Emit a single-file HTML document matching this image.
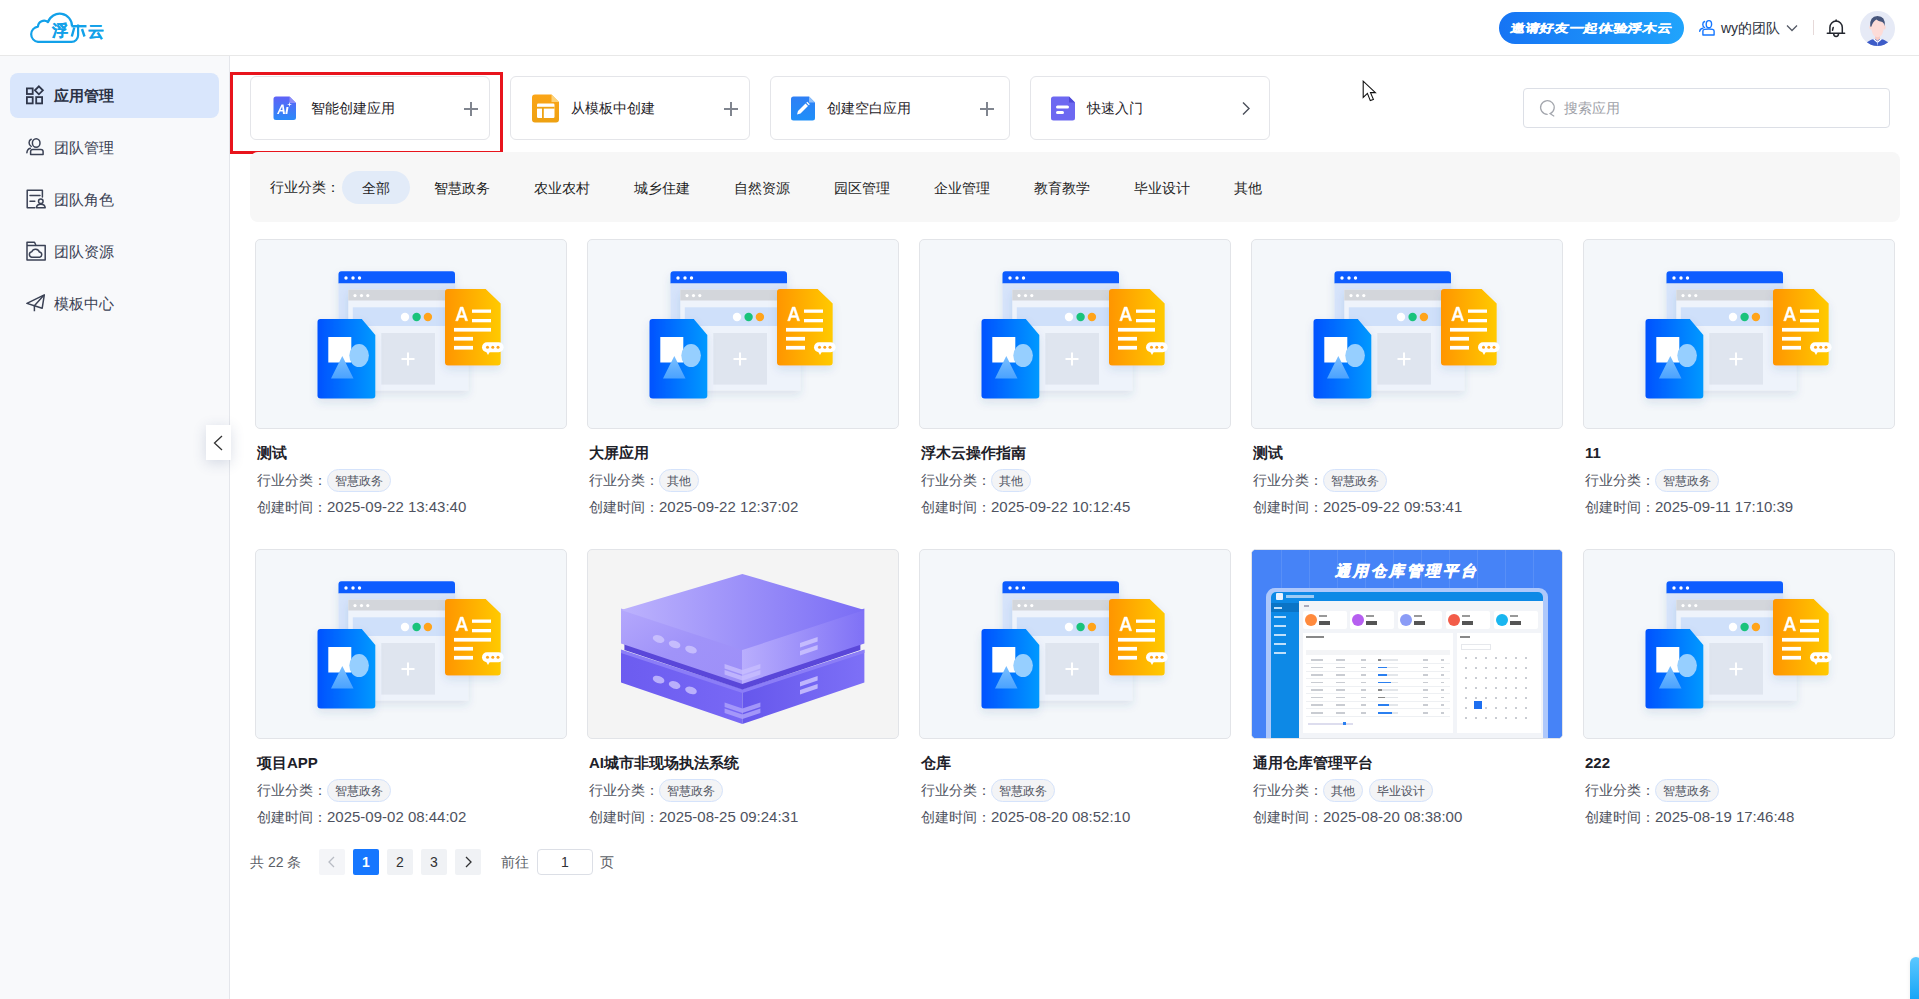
<!DOCTYPE html>
<html><head><meta charset="utf-8">
<style>
*{box-sizing:border-box;margin:0;padding:0}
html,body{width:1919px;height:999px;overflow:hidden;background:#fff;font-family:"Liberation Sans",sans-serif;color:#303133}
.abs{position:absolute}
#header{position:absolute;left:0;top:0;width:1919px;height:56px;border-bottom:1px solid #e8e8e8;background:#fff}
#sidebar{position:absolute;left:0;top:56px;width:230px;height:943px;background:#f8f9fb;border-right:1px solid #e4e6eb}
.menu{position:absolute;left:10px;width:209px;height:45px;border-radius:8px;font-size:15px;color:#3b4255;line-height:45px}
.menu.active{background:#d9e6fc;font-weight:bold;color:#2b3245}
.menu svg{position:absolute;left:16px;top:12px}
.menu span{position:absolute;left:44px;top:0}
.act{position:absolute;top:76px;width:240px;height:64px;border:1px solid #e4e5e9;border-radius:6px;background:#fff}
.act .t{position:absolute;top:0;line-height:62px;font-size:14px;color:#1f2329}
.act .plus{position:absolute;left:213px;top:25px;width:14px;height:14px}
.act .plus:before{content:"";position:absolute;left:6px;top:0;width:2px;height:14px;background:#80858f}
.act .plus:after{content:"";position:absolute;left:0;top:6px;width:14px;height:2px;background:#80858f}
#filter{position:absolute;left:250px;top:152px;width:1650px;height:70px;background:#f7f7f7;border-radius:8px}
#filter .lbl{position:absolute;left:20px;top:0;line-height:71px;font-size:14px;color:#1f1f1f}
#filter .it{position:absolute;top:19px;height:33px;line-height:34px;font-size:14px;color:#1f1f1f}
#filter .pill{background:#e2ebf8;border-radius:17px;width:68px;text-align:center}
.card{position:absolute;width:313px;height:280px}
.card .img{position:absolute;left:0;top:0;width:312px;height:190px;border:1px solid #e2e4e8;border-radius:5px;background:#f4f7fa;overflow:hidden}
.card .ti{position:absolute;left:2px;top:204px;font-size:15px;font-weight:bold;color:#1d2129;line-height:20px}
.card .r1{position:absolute;left:2px;top:230px;font-size:14px;color:#4e5260;line-height:22px}
.card .r2{position:absolute;left:2px;top:257px;font-size:14px;color:#4e5260;line-height:22px}
.tag+.tag{margin-left:6px}
.tag{display:inline-block;height:23px;line-height:22px;padding:0 7px;border:1px solid #d5e3fb;background:#f3f4f6;border-radius:12px;font-size:12px;color:#4e5260;vertical-align:top;margin-left:0}
.pg{position:absolute;top:849px;width:26px;height:26px;border-radius:2px;background:#f0f2f5;font-size:14px;color:#303133;text-align:center;line-height:26px}
</style></head><body>

<div id="header">
  <svg class="abs" style="left:25px;top:8px" width="85" height="40" viewBox="0 0 85 40">
    <g fill="none" stroke="#12a1e9" stroke-width="2.2" stroke-linecap="butt" stroke-linejoin="round">
      <path d="M47,18.2 A12.3,12.3 0 0 0 23,14.2 A6,6 0 0 0 13,18.6 A7.7,7.7 0 0 0 13,33.9 L46.5,33.9 A6.6,6.6 0 0 0 53.1,27.3 L53.1,16.4"/>
      <path d="M46.5,18.2 L61.5,18.2" stroke-width="2.4"/>
      <path d="M49.3,19.5 L46.8,28.5 M57,21 L59.5,28.5" stroke-width="2.4"/>
    </g>
    <text x="27" y="28" font-size="15.5" font-weight="bold" fill="#12a1e9" stroke="#12a1e9" stroke-width="0.2">浮</text>
    <text x="63" y="28.5" font-size="15.5" font-weight="bold" fill="#12a1e9" stroke="#12a1e9" stroke-width="0.2">云</text>
  </svg>
  <div class="abs" style="left:1499px;top:12px;width:185px;height:32px;border-radius:16px;background:linear-gradient(90deg,#1674f4,#20a4fc)"><div class="abs" style="left:0;top:0;width:185px;height:32px;color:#fff;font-size:14.2px;font-weight:bold;line-height:32px;text-align:center;-webkit-text-stroke:0.35px #fff;letter-spacing:0.7px;transform:scaleY(0.8) skewX(-9deg)">邀请好友一起体验浮木云</div></div>
  <svg class="abs" style="left:1698px;top:19px" width="18" height="18" viewBox="0 0 18 18"><g fill="none" stroke="#1677ff" stroke-width="1.4" stroke-linecap="round" stroke-linejoin="round"><ellipse cx="10.9" cy="5.2" rx="2.7" ry="3.6"/><path d="M6.6,2.5 A2.6,3.2 0 0 0 6.6,8.6"/><path d="M4.9,16 V12.1 Q4.9,10.7 6.6,10.4 Q10.6,9.6 14.6,10.4 Q16.1,10.8 16.1,12.1 V16 Z"/><path d="M1.7,12.3 Q1.9,9.6 5,9.2"/></g></svg>
  <div class="abs" style="left:1721px;top:17px;font-size:14px;line-height:22px;color:#2a2f3a">wy的团队</div>
  <svg class="abs" style="left:1786px;top:24px" width="12" height="8" viewBox="0 0 12 8"><path d="M1,1.5 L6,6.5 L11,1.5" fill="none" stroke="#555a66" stroke-width="1.3"/></svg>
  <div class="abs" style="left:1813px;top:20px;width:1px;height:15px;background:#e6d9d9"></div>
  <svg class="abs" style="left:1826px;top:18px" width="20" height="20" viewBox="0 0 20 20"><g fill="none" stroke="#23262e" stroke-width="1.5" stroke-linecap="round"><path d="M3.9,15.3 V9.5 A6.2,6.4 0 0 1 16.3,9.5 V15.3"/><path d="M1.3,15.3 H18.6"/><path d="M7.7,15.8 a2.4,2.7 0 0 0 4.8,0"/><path d="M7.2,9.5 L6.5,12.3"/><path d="M10.1,2 V3"/></g></svg>
  <svg class="abs" style="left:1860px;top:11px" width="35" height="35" viewBox="0 0 35 35">
    <defs><clipPath id="avc"><circle cx="17.5" cy="17.5" r="17.5"/></clipPath></defs>
    <circle cx="17.5" cy="17.5" r="17.5" fill="#e6eaf6"/>
    <g clip-path="url(#avc)">
      <path d="M6.5,31.5 Q11,28 16,27.6 L19,27.6 Q24,28 28.5,31.5 Q23,36 17.5,35.8 Q12,36 6.5,31.5 Z" fill="#3d5cc8"/>
      <path d="M15,22 h5 v5.5 l-2.5,2.5 l-2.5,-2.5z" fill="#f8cbc4"/>
      <path d="M14.3,27.4 L17.5,30.5 L20.7,27.4 L21.8,28.5 L17.5,32 L13.2,28.5z" fill="#fff"/>
      <path d="M16.9,30.5 L17.5,35.5 L18.1,30.5z" fill="#c5d3ff"/>
      <ellipse cx="10.6" cy="16.3" rx="1.3" ry="2.2" fill="#fbd8d3"/>
      <ellipse cx="24.4" cy="16.3" rx="1.3" ry="2.2" fill="#fbd8d3"/>
      <path d="M10.9,11 Q10.7,21 14,24.8 Q17.5,27.6 21,24.8 Q24.3,21 24.1,11 Q17.5,6 10.9,11 Z" fill="#fddcd8"/>
      <path d="M10.2,15.5 Q9.4,5 17.5,5 Q25.6,5 24.8,15.2 Q24,11.5 21.5,10.8 Q18.5,10.3 16.3,8.6 Q13,10.5 11.3,15.8 Z" fill="#46557b"/>
    </g>
  </svg>
</div>

<div id="sidebar">
  <div class="menu active" style="top:17px">
    <svg width="20" height="20" viewBox="0 0 20 20"><g fill="none" stroke="#2f364a" stroke-width="1.8"><rect x="0.9" y="3.4" width="5.8" height="5.6"/><rect x="0.9" y="12.1" width="5.8" height="6.3"/><rect x="10.2" y="12.1" width="5.9" height="6.3"/><path d="M12.9,1.3 L16.9,5.3 L12.9,9.3 L8.9,5.3 Z"/></g></svg>
    <span>应用管理</span></div>
  <div class="menu" style="top:69px">
    <svg width="20" height="20" viewBox="0 0 20 20"><g fill="none" stroke="#3b4255" stroke-width="1.5" stroke-linecap="round" stroke-linejoin="round"><ellipse cx="10.2" cy="6" rx="3.8" ry="4.3"/><path d="M5.2,2.3 A3.3,3.8 0 0 0 5.2,9.4"/><path d="M4.6,17.6 V14.6 Q4.6,12.6 6.8,12.5 H14.8 Q17.1,12.6 17.1,14.6 V17.6 Z"/><path d="M0.9,15.8 Q1.2,11.9 4.4,11.3"/></g></svg>
    <span>团队管理</span></div>
  <div class="menu" style="top:121px">
    <svg width="20" height="20" viewBox="0 0 20 20"><g fill="none" stroke="#3b4255" stroke-width="1.5" stroke-linejoin="round" stroke-linecap="round"><path d="M8.8,18.8 H1.2 V1.2 H16.4 V8"/><path d="M4,6.4 H14 M4,12.3 H8.8"/><circle cx="14.8" cy="12.2" r="2.3"/><path d="M10.4,18.8 Q10.6,15.2 14.8,15.2 Q19,15.2 19.2,18.8 Z"/></g></svg>
    <span>团队角色</span></div>
  <div class="menu" style="top:173px">
    <svg width="20" height="20" viewBox="0 0 20 20"><g fill="none" stroke="#3b4255" stroke-width="1.5" stroke-linejoin="round"><path d="M1,18.9 V1.3 H8.5 L10,4.5 H19.2 V18.9 Z"/><path d="M1,4.5 H10"/><path d="M5.6,16.2 a2.8,2.8 0 0 1 0.2,-5.5 a4,3.8 0 0 1 7.6,0.4 a2.6,2.6 0 0 1 0.4,5.1 Z"/></g></svg>
    <span>团队资源</span></div>
  <div class="menu" style="top:225px">
    <svg style="top:13px" width="19" height="20" viewBox="0 0 19 20"><g fill="none" stroke="#3b4255" stroke-width="1.5" stroke-linejoin="round"><path d="M0.9,9.4 L18.3,0.9 L16.2,14.2 L8.4,11.7 Z"/><path d="M17.6,1.6 L8.4,11.7 V17.2"/></g></svg>
    <span>模板中心</span></div>
</div>

<!-- collapse -->
<div class="abs" style="left:206px;top:425px;width:25px;height:35px;background:#fff;box-shadow:0 3px 14px rgba(50,70,120,0.18)">
  <svg class="abs" style="left:7px;top:10px" width="10" height="16" viewBox="0 0 10 16"><path d="M9,1 L1.5,8 L9,15" fill="none" stroke="#333" stroke-width="1.3"/></svg>
</div>


<div class="abs" style="left:230px;top:72px;width:273px;height:82px;border:3px solid #e8141c"></div>
<div class="act" style="left:250px">
  <svg class="abs" style="left:22px;top:19px" width="24" height="25" viewBox="0 0 24 25">
    <defs><linearGradient id="gai" x1="0" y1="0" x2="0" y2="1"><stop offset="0" stop-color="#5f62f7"/><stop offset="1" stop-color="#2a8af8"/></linearGradient></defs>
    <path d="M3,0.5 H16.5 L23,7 V21.5 a2.5,2.5 0 0 1 -2.5,2.5 H3 a2.5,2.5 0 0 1 -2.5,-2.5 V3 a2.5,2.5 0 0 1 2.5,-2.5z" fill="url(#gai)"/>
    <path d="M16.5,0.5 V7 H23z" fill="#8f8ff8"/>
    <path d="M4,18 L8.5,8.5 H10.5 L12,18 H10 L9.7,15.5 H6.8 L5.8,18z M7.5,14 H9.5 L9.2,10.5z" fill="#fff"/>
    <path d="M13.5,11 H15.5 L14.3,18 H12.3z" fill="#fff"/>
    <path d="M16.5,6 L17,8 L19,8.5 L17,9 L16.5,11 L16,9 L14,8.5 L16,8z" fill="#fff"/>
  </svg>
  <div class="t" style="left:60px">智能创建应用</div>
  <div class="plus"></div>
</div>
<div class="act" style="left:510px">
  <svg class="abs" style="left:21px;top:17px" width="28" height="29" viewBox="0 0 28 29">
    <defs><linearGradient id="gtp" x1="0" y1="0" x2="0" y2="1"><stop offset="0" stop-color="#fba517"/><stop offset="1" stop-color="#eea112"/></linearGradient></defs>
    <path d="M3,0.5 H19.5 L27,8 V25.5 a3,3 0 0 1 -3,3 H3 a3,3 0 0 1 -3,-3 V3.5 a3,3 0 0 1 3,-3z" fill="url(#gtp)"/>
    <path d="M19.5,0.5 V8 H27z" fill="#fcd27a"/>
    <rect x="5" y="9.5" width="17.5" height="14.5" rx="1.2" fill="#fff"/>
    <rect x="5" y="12.8" width="17.5" height="1.8" fill="#eea314"/>
    <rect x="10" y="13" width="1.8" height="11" fill="#eea314"/>
  </svg>
  <div class="t" style="left:60px">从模板中创建</div>
  <div class="plus"></div>
</div>
<div class="act" style="left:770px">
  <svg class="abs" style="left:20px;top:19px" width="25" height="25" viewBox="0 0 25 25">
    <defs><linearGradient id="gbl" x1="0" y1="0" x2="0" y2="1"><stop offset="0" stop-color="#2f7ff5"/><stop offset="1" stop-color="#1e8ff9"/></linearGradient></defs>
    <path d="M2.5,0.5 H18 L24,6.5 V22 a2.5,2.5 0 0 1 -2.5,2.5 H2.5 a2.5,2.5 0 0 1 -2.5,-2.5 V3 a2.5,2.5 0 0 1 2.5,-2.5z" fill="url(#gbl)"/>
    <path d="M18,0.5 V6.5 H24z" fill="#8fc0fb"/>
    <path d="M6,18.5 L7,15 L14.5,7.5 L17,10 L9.5,17.5z" fill="#fff"/>
    <path d="M15.3,6.7 L16.3,5.7 L18.8,8.2 L17.8,9.2z" fill="#fff"/>
  </svg>
  <div class="t" style="left:56px">创建空白应用</div>
  <div class="plus" style="left:209px"></div>
</div>
<div class="act" style="left:1030px">
  <svg class="abs" style="left:20px;top:19px" width="25" height="25" viewBox="0 0 25 25">
    <path d="M2.5,0.5 H18 L24,6.5 V22 a2.5,2.5 0 0 1 -2.5,2.5 H2.5 a2.5,2.5 0 0 1 -2.5,-2.5 V3 a2.5,2.5 0 0 1 2.5,-2.5z" fill="#6d68f1"/>
    <path d="M18,0.5 V6.5 H24z" fill="#4f49d6"/>
    <rect x="5" y="9.5" width="13" height="3" rx="1.5" fill="#fff"/>
    <rect x="5" y="15" width="8" height="3" rx="1.5" fill="#fff"/>
  </svg>
  <div class="t" style="left:56px">快速入门</div>
  <svg class="abs" style="left:210px;top:24px" width="10" height="15" viewBox="0 0 10 15"><path d="M2,1.5 L8,7.5 L2,13.5" fill="none" stroke="#4a4f5a" stroke-width="1.4"/></svg>
</div>
<!-- search -->
<div class="abs" style="left:1523px;top:88px;width:367px;height:40px;border:1px solid #dcdfe6;border-radius:4px;background:#fff">
  <svg class="abs" style="left:13px;top:8px" width="22" height="22" viewBox="0 0 22 22"><g fill="none" stroke="#a3a6ad" stroke-width="1.3" stroke-linecap="round"><path d="M10.2,17.3 A6.8,6.8 0 1 1 13.2,16.7 L16.8,19"/></g></svg>
  <div class="abs" style="left:40px;top:9px;font-size:14px;line-height:20px;color:#9ea1a8">搜索应用</div>
</div>
<div id="filter"><div class="lbl">行业分类：</div><div class="it pill" style="left:92px">全部</div><div class="it" style="left:184px">智慧政务</div><div class="it" style="left:284px">农业农村</div><div class="it" style="left:384px">城乡住建</div><div class="it" style="left:484px">自然资源</div><div class="it" style="left:584px">园区管理</div><div class="it" style="left:684px">企业管理</div><div class="it" style="left:784px">教育教学</div><div class="it" style="left:884px">毕业设计</div><div class="it" style="left:984px">其他</div></div>
<svg width="0" height="0" style="position:absolute">
 <defs>
  <linearGradient id="gbd" x1="0" y1="0" x2="1" y2="0"><stop offset="0" stop-color="#0052ff"/><stop offset="1" stop-color="#0099ff"/></linearGradient>
  <linearGradient id="god" x1="0" y1="0" x2="1" y2="0"><stop offset="0" stop-color="#ff9500"/><stop offset="1" stop-color="#ffca00"/></linearGradient>
  <linearGradient id="gtri" x1="0" y1="0" x2="0" y2="1"><stop offset="0" stop-color="#7cc0ff"/><stop offset="1" stop-color="#4aa2ff"/></linearGradient>
  <filter id="shd" x="-30%" y="-30%" width="160%" height="160%"><feDropShadow dx="0" dy="4" stdDeviation="4" flood-color="#3a5a90" flood-opacity="0.13"/></filter>
  <symbol id="ill" viewBox="0 0 312 190">
   <g filter="url(#shd)">
    <path d="M86.5,32.3 H197 a3,3 0 0 1 3,3 V44.5 H83.5 V35.3 a3,3 0 0 1 3,-3z" fill="#0a5cff"/>
    <rect x="83.5" y="44.5" width="116.5" height="60" fill="#d6e4fb"/>
   </g>
   <circle cx="91" cy="39" r="1.7" fill="#fff"/><circle cx="98" cy="39" r="1.7" fill="#fff"/><circle cx="104.5" cy="39" r="1.7" fill="#fff"/>
   <g filter="url(#shd)">
    <rect x="93.3" y="50.6" width="120" height="101" fill="#eef3fb"/>
   </g>
   <rect x="93.3" y="50.6" width="120" height="10.9" fill="#d3d6db"/>
   <circle cx="100" cy="56.6" r="1.6" fill="#fff"/><circle cx="106.5" cy="56.6" r="1.6" fill="#fff"/><circle cx="112.8" cy="56.6" r="1.6" fill="#fff"/>
   <rect x="97.8" y="68.3" width="115" height="18.7" fill="#cfe0fa"/>
   <circle cx="150" cy="78" r="4.2" fill="#fff"/><circle cx="161.6" cy="78" r="4.2" fill="#19c37b"/><circle cx="172.9" cy="78" r="4.2" fill="#ffa41b"/>
   <rect x="126.3" y="94" width="53.7" height="51.6" fill="#dfe5ef"/>
   <path d="M153,113.5 V126.5 M146.5,120 H159.5" stroke="#fff" stroke-width="2"/>
   <g filter="url(#shd)">
    <path d="M65.5,80 H106.8 L120.3,96 V156.4 a3,3 0 0 1 -3,3 H65.5 a3,3 0 0 1 -3,-3 V83 a3,3 0 0 1 3,-3z" fill="url(#gbd)"/>
   </g>
   <rect x="73.3" y="98" width="23" height="25.5" fill="#fff"/>
   <ellipse cx="104.1" cy="116.6" rx="9.8" ry="11.5" fill="#96cfff"/>
   <path d="M87.3,117 L98.5,139.6 H76z" fill="url(#gtri)"/>
   <g filter="url(#shd)">
    <path d="M193,50 H230.7 L245.7,64.5 V123.5 a3,3 0 0 1 -3,3 H193 a3,3 0 0 1 -3,-3 V53 a3,3 0 0 1 3,-3z" fill="url(#god)"/>
   </g>
   <path d="M200.6,81.8 L205.3,68 H208 L212.7,81.8 H210.4 L209.3,78.5 H204 L202.9,81.8z M204.6,76.6 H208.7 L206.65,70.5z" fill="#fff" stroke="#fff" stroke-width="0.5"/>
   <g fill="#fff"><rect x="217" y="70.5" width="19" height="3.3"/><rect x="217" y="80" width="19" height="3.3"/><rect x="199" y="88.9" width="37" height="3.7"/><rect x="199" y="97.9" width="19" height="3.7"/><rect x="199" y="106.9" width="19" height="3.7"/></g>
   <rect x="227" y="103.3" width="21.7" height="10" rx="5" fill="#fff"/>
   <path d="M231,112.5 L233,116 L235,112.5z" fill="#fff"/>
   <g fill="#ffa41b"><circle cx="232.5" cy="108.3" r="1.5"/><circle cx="237.8" cy="108.3" r="1.5"/><circle cx="243" cy="108.3" r="1.5"/></g>
  </symbol>
 </defs>
</svg>
<div class="card" style="left:255px;top:239px"><div class="img" style=""><svg width="312" height="190" style="position:absolute;left:-1px;top:-1px"><use href="#ill"/></svg></div><div class="ti">测试</div><div class="r1">行业分类：<span class="tag">智慧政务</span></div><div class="r2">创建时间：<span style="font-size:15px">2025-09-22 13:43:40</span></div></div><div class="card" style="left:587px;top:239px"><div class="img" style=""><svg width="312" height="190" style="position:absolute;left:-1px;top:-1px"><use href="#ill"/></svg></div><div class="ti">大屏应用</div><div class="r1">行业分类：<span class="tag">其他</span></div><div class="r2">创建时间：<span style="font-size:15px">2025-09-22 12:37:02</span></div></div><div class="card" style="left:919px;top:239px"><div class="img" style=""><svg width="312" height="190" style="position:absolute;left:-1px;top:-1px"><use href="#ill"/></svg></div><div class="ti">浮木云操作指南</div><div class="r1">行业分类：<span class="tag">其他</span></div><div class="r2">创建时间：<span style="font-size:15px">2025-09-22 10:12:45</span></div></div><div class="card" style="left:1251px;top:239px"><div class="img" style=""><svg width="312" height="190" style="position:absolute;left:-1px;top:-1px"><use href="#ill"/></svg></div><div class="ti">测试</div><div class="r1">行业分类：<span class="tag">智慧政务</span></div><div class="r2">创建时间：<span style="font-size:15px">2025-09-22 09:53:41</span></div></div><div class="card" style="left:1583px;top:239px"><div class="img" style=""><svg width="312" height="190" style="position:absolute;left:-1px;top:-1px"><use href="#ill"/></svg></div><div class="ti">11</div><div class="r1">行业分类：<span class="tag">智慧政务</span></div><div class="r2">创建时间：<span style="font-size:15px">2025-09-11 17:10:39</span></div></div><div class="card" style="left:255px;top:549px"><div class="img" style=""><svg width="312" height="190" style="position:absolute;left:-1px;top:-1px"><use href="#ill"/></svg></div><div class="ti">项目APP</div><div class="r1">行业分类：<span class="tag">智慧政务</span></div><div class="r2">创建时间：<span style="font-size:15px">2025-09-02 08:44:02</span></div></div><div class="card" style="left:587px;top:549px"><div class="img" style="background:#f4f4f4"><svg width="312" height="190" viewBox="0 0 312 190" style="position:absolute;left:-1px;top:-1px">
 <defs>
  <linearGradient id="sv_top" x1="0" y1="0" x2="1" y2="0"><stop offset="0" stop-color="#bdb3fd"/><stop offset="1" stop-color="#7a6df5"/></linearGradient>
  <linearGradient id="sv_ul" x1="0" y1="0" x2="1" y2="1"><stop offset="0" stop-color="#b4a8fc"/><stop offset="0.5" stop-color="#a093f9"/><stop offset="1" stop-color="#9d8ff8"/></linearGradient>
  <linearGradient id="sv_ur" x1="0" y1="0" x2="1" y2="0"><stop offset="0" stop-color="#b9aefd"/><stop offset="1" stop-color="#7f71f6"/></linearGradient>
  <linearGradient id="sv_ll" x1="0" y1="0" x2="1" y2="0"><stop offset="0" stop-color="#6c5cf0"/><stop offset="1" stop-color="#7868f5"/></linearGradient>
  <linearGradient id="sv_lr" x1="0" y1="0" x2="1" y2="0"><stop offset="0" stop-color="#6657ec"/><stop offset="1" stop-color="#7d70f7"/></linearGradient>
 </defs>
 <!-- lower box -->
 <path d="M34,101 L155.4,142 L155.4,175 L34,133.4z" fill="url(#sv_ll)"/>
 <path d="M155.4,142 L277.4,101 L277.4,133.4 L155.4,175z" fill="url(#sv_lr)"/>
 
 <!-- dark gap -->
 <path d="M34,100.5 L155.4,140 L277.4,100.5 V104 L155.4,144 L34,104z" fill="#8b7df7"/><path d="M37.4,93 L155.4,133 L273.4,93 V101 L155.4,140.5 L37.4,101z" fill="#5a47d9"/>
 <!-- upper box -->
 <path d="M34,59.5 L155.4,99.5 L155.4,135 L34,94.4z" fill="url(#sv_ul)"/>
 <path d="M155,99.5 L277.4,59.5 L277.4,94.4 L155,135z" fill="url(#sv_ur)"/>
 <path d="M34,61 L155.4,25 L277.4,61 L155.4,101z" fill="url(#sv_top)"/>
 <!-- ovals upper -->
 <g fill="#d2caff" opacity="0.75">
  <ellipse cx="71.6" cy="90" rx="6" ry="3.6" transform="rotate(18 71.6 90)"/>
  <ellipse cx="87.6" cy="95.4" rx="6" ry="3.6" transform="rotate(18 87.6 95.4)"/>
  <ellipse cx="104" cy="100.6" rx="6" ry="3.6" transform="rotate(18 104 100.6)"/>
  <ellipse cx="71.6" cy="130.6" rx="6" ry="3.6" transform="rotate(18 71.6 130.6)"/>
  <ellipse cx="87.6" cy="136" rx="6" ry="3.6" transform="rotate(18 87.6 136)"/>
  <ellipse cx="104" cy="141.4" rx="6" ry="3.6" transform="rotate(18 104 141.4)"/>
 </g>
 <!-- stripes right faces -->
 <g fill="#cdc4ff" opacity="0.85">
  <path d="M213,94 L230.6,88 V92.5 L213,98.5z"/>
  <path d="M213,102 L230.6,96 V100.5 L213,106.5z"/>
  <path d="M213,133 L230.6,127 V131.5 L213,137.5z"/>
  <path d="M213,141 L230.6,135 V139.5 L213,145.5z"/>
 </g>
 <!-- V stripes -->
 <g fill="#c8beff" opacity="0.8">
  <path d="M137.6,115 L155.4,121 L173.4,115 V119.5 L155.4,125.5 L137.6,119.5z"/>
  <path d="M137.6,121 L155.4,127 L173.4,121 V125.5 L155.4,131.5 L137.6,125.5z"/>
 </g>
 <g fill="#a99dfb" opacity="0.9">
  <path d="M137.6,153.5 L155.4,159.5 L173.4,153.5 V158 L155.4,164 L137.6,158z"/>
  <path d="M137.6,159.5 L155.4,165.5 L173.4,159.5 V164 L155.4,170 L137.6,164z"/>
 </g>
</svg>
</div><div class="ti">AI城市非现场执法系统</div><div class="r1">行业分类：<span class="tag">智慧政务</span></div><div class="r2">创建时间：<span style="font-size:15px">2025-08-25 09:24:31</span></div></div><div class="card" style="left:919px;top:549px"><div class="img" style=""><svg width="312" height="190" style="position:absolute;left:-1px;top:-1px"><use href="#ill"/></svg></div><div class="ti">仓库</div><div class="r1">行业分类：<span class="tag">智慧政务</span></div><div class="r2">创建时间：<span style="font-size:15px">2025-08-20 08:52:10</span></div></div><div class="card" style="left:1251px;top:549px"><div class="img" style="background:#4784f8"><div style="position:absolute;left:-1px;top:-1px;width:312px;height:190px;overflow:hidden;border-radius:5px;background:#4683f7"><div style="position:absolute;left:30px;top:0;width:1px;height:40px;background:rgba(255,255,255,0.10)"></div><div style="position:absolute;left:58px;top:0;width:1px;height:40px;background:rgba(255,255,255,0.10)"></div><div style="position:absolute;left:86px;top:0;width:1px;height:40px;background:rgba(255,255,255,0.10)"></div><div style="position:absolute;left:114px;top:0;width:1px;height:40px;background:rgba(255,255,255,0.10)"></div><div style="position:absolute;left:142px;top:0;width:1px;height:40px;background:rgba(255,255,255,0.10)"></div><div style="position:absolute;left:170px;top:0;width:1px;height:40px;background:rgba(255,255,255,0.10)"></div><div style="position:absolute;left:198px;top:0;width:1px;height:40px;background:rgba(255,255,255,0.10)"></div><div style="position:absolute;left:226px;top:0;width:1px;height:40px;background:rgba(255,255,255,0.10)"></div><div style="position:absolute;left:254px;top:0;width:1px;height:40px;background:rgba(255,255,255,0.10)"></div><div style="position:absolute;left:282px;top:0;width:1px;height:40px;background:rgba(255,255,255,0.10)"></div><div style="position:absolute;left:78px;top:12px;width:156px;text-align:center;font-size:15px;line-height:20px;font-weight:bold;font-style:italic;color:#fff;letter-spacing:3px;-webkit-text-stroke:0.6px #fff">通用仓库管理平台</div><div style="position:absolute;left:15px;top:39px;width:282px;height:160px;border-radius:9px;background:#aec8fb"></div><div style="position:absolute;left:20px;top:43px;width:272px;height:150px;border-radius:5px 5px 0 0;background:#f2f4f8;overflow:hidden"><div style="position:absolute;left:0;top:0;width:272px;height:9px;background:#0d89e6"></div><div style="position:absolute;left:5px;top:1px;width:7px;height:7px;background:#e8f2ff;border-radius:1px"></div><div style="position:absolute;left:15px;top:3px;width:28px;height:3px;background:#9ccbf5"></div><div style="position:absolute;left:0;top:9px;width:28px;height:150px;background:#0d89e6"></div><div style="position:absolute;left:0;top:11px;width:28px;height:9px;background:#0a74c6"></div><div style="position:absolute;left:3px;top:15px;width:8px;height:2px;background:#bfe0fb"></div><div style="position:absolute;left:3px;top:24px;width:12px;height:2px;background:#bfe0fb"></div><div style="position:absolute;left:3px;top:33px;width:12px;height:2px;background:#bfe0fb"></div><div style="position:absolute;left:3px;top:42px;width:12px;height:2px;background:#bfe0fb"></div><div style="position:absolute;left:3px;top:51px;width:12px;height:2px;background:#bfe0fb"></div><div style="position:absolute;left:3px;top:60px;width:12px;height:2px;background:#bfe0fb"></div><div style="position:absolute;left:33px;top:13px;width:5px;height:2px;background:#aab"></div><div style="position:absolute;left:32.0px;top:19px;width:44px;height:18px;background:#fff;border-radius:2px"></div><div style="position:absolute;left:34.0px;top:22px;width:12px;height:12px;border-radius:6px;background:#ff8a3d"></div><div style="position:absolute;left:48.0px;top:23px;width:8px;height:2px;background:#999"></div><div style="position:absolute;left:48.0px;top:29px;width:11px;height:4px;background:#555"></div><div style="position:absolute;left:79.4px;top:19px;width:44px;height:18px;background:#fff;border-radius:2px"></div><div style="position:absolute;left:81.4px;top:22px;width:12px;height:12px;border-radius:6px;background:#b65ff0"></div><div style="position:absolute;left:95.4px;top:23px;width:8px;height:2px;background:#999"></div><div style="position:absolute;left:95.4px;top:29px;width:11px;height:4px;background:#555"></div><div style="position:absolute;left:127.4px;top:19px;width:44px;height:18px;background:#fff;border-radius:2px"></div><div style="position:absolute;left:129.4px;top:22px;width:12px;height:12px;border-radius:6px;background:#8b9cf6"></div><div style="position:absolute;left:143.4px;top:23px;width:8px;height:2px;background:#999"></div><div style="position:absolute;left:143.4px;top:29px;width:11px;height:4px;background:#555"></div><div style="position:absolute;left:175.0px;top:19px;width:44px;height:18px;background:#fff;border-radius:2px"></div><div style="position:absolute;left:177.0px;top:22px;width:12px;height:12px;border-radius:6px;background:#f35c49"></div><div style="position:absolute;left:191.0px;top:23px;width:8px;height:2px;background:#999"></div><div style="position:absolute;left:191.0px;top:29px;width:11px;height:4px;background:#555"></div><div style="position:absolute;left:222.6px;top:19px;width:44px;height:18px;background:#fff;border-radius:2px"></div><div style="position:absolute;left:224.6px;top:22px;width:12px;height:12px;border-radius:6px;background:#19b6f0"></div><div style="position:absolute;left:238.6px;top:23px;width:8px;height:2px;background:#999"></div><div style="position:absolute;left:238.6px;top:29px;width:11px;height:4px;background:#555"></div><div style="position:absolute;left:32px;top:41px;width:150px;height:100px;background:#fff"></div><div style="position:absolute;left:35px;top:44px;width:18px;height:2px;background:#888"></div><div style="position:absolute;left:35px;top:58px;width:144px;height:5px;background:#f3f4f6"></div><div style="position:absolute;left:35px;top:71.0px;width:144px;height:1px;background:#eef0f3"></div><div style="position:absolute;left:40px;top:67.0px;width:12px;height:1.5px;background:#c9ccd2"></div><div style="position:absolute;left:65px;top:67.0px;width:9px;height:1.5px;background:#c9ccd2"></div><div style="position:absolute;left:90px;top:67.0px;width:5px;height:1.5px;background:#c9ccd2"></div><div style="position:absolute;left:152px;top:67.0px;width:5px;height:1.5px;background:#c9ccd2"></div><div style="position:absolute;left:170px;top:67.0px;width:3px;height:1.5px;background:#c9ccd2"></div><div style="position:absolute;left:107px;top:67.0px;width:20px;height:1.5px;background:#e3e6ea"></div><div style="position:absolute;left:107px;top:67.0px;width:3px;height:1.5px;background:#888"></div><div style="position:absolute;left:35px;top:78.6px;width:144px;height:1px;background:#eef0f3"></div><div style="position:absolute;left:40px;top:74.6px;width:12px;height:1.5px;background:#c9ccd2"></div><div style="position:absolute;left:65px;top:74.6px;width:9px;height:1.5px;background:#c9ccd2"></div><div style="position:absolute;left:90px;top:74.6px;width:5px;height:1.5px;background:#c9ccd2"></div><div style="position:absolute;left:152px;top:74.6px;width:5px;height:1.5px;background:#c9ccd2"></div><div style="position:absolute;left:170px;top:74.6px;width:3px;height:1.5px;background:#c9ccd2"></div><div style="position:absolute;left:107px;top:74.6px;width:20px;height:1.5px;background:#e3e6ea"></div><div style="position:absolute;left:107px;top:74.6px;width:9px;height:1.5px;background:#2a7ff0"></div><div style="position:absolute;left:35px;top:86.0px;width:144px;height:1px;background:#eef0f3"></div><div style="position:absolute;left:40px;top:82.0px;width:12px;height:1.5px;background:#c9ccd2"></div><div style="position:absolute;left:65px;top:82.0px;width:9px;height:1.5px;background:#c9ccd2"></div><div style="position:absolute;left:90px;top:82.0px;width:5px;height:1.5px;background:#c9ccd2"></div><div style="position:absolute;left:152px;top:82.0px;width:5px;height:1.5px;background:#c9ccd2"></div><div style="position:absolute;left:170px;top:82.0px;width:3px;height:1.5px;background:#c9ccd2"></div><div style="position:absolute;left:107px;top:82.0px;width:20px;height:1.5px;background:#e3e6ea"></div><div style="position:absolute;left:107px;top:82.0px;width:9px;height:1.5px;background:#2a7ff0"></div><div style="position:absolute;left:35px;top:93.6px;width:144px;height:1px;background:#eef0f3"></div><div style="position:absolute;left:40px;top:89.6px;width:12px;height:1.5px;background:#c9ccd2"></div><div style="position:absolute;left:65px;top:89.6px;width:9px;height:1.5px;background:#c9ccd2"></div><div style="position:absolute;left:90px;top:89.6px;width:5px;height:1.5px;background:#c9ccd2"></div><div style="position:absolute;left:152px;top:89.6px;width:5px;height:1.5px;background:#c9ccd2"></div><div style="position:absolute;left:170px;top:89.6px;width:3px;height:1.5px;background:#c9ccd2"></div><div style="position:absolute;left:107px;top:89.6px;width:20px;height:1.5px;background:#e3e6ea"></div><div style="position:absolute;left:107px;top:89.6px;width:13px;height:1.5px;background:#2a7ff0"></div><div style="position:absolute;left:35px;top:101.0px;width:144px;height:1px;background:#eef0f3"></div><div style="position:absolute;left:40px;top:97.0px;width:12px;height:1.5px;background:#c9ccd2"></div><div style="position:absolute;left:65px;top:97.0px;width:9px;height:1.5px;background:#c9ccd2"></div><div style="position:absolute;left:90px;top:97.0px;width:5px;height:1.5px;background:#c9ccd2"></div><div style="position:absolute;left:152px;top:97.0px;width:5px;height:1.5px;background:#c9ccd2"></div><div style="position:absolute;left:170px;top:97.0px;width:3px;height:1.5px;background:#c9ccd2"></div><div style="position:absolute;left:107px;top:97.0px;width:20px;height:1.5px;background:#e3e6ea"></div><div style="position:absolute;left:107px;top:97.0px;width:4px;height:1.5px;background:#888"></div><div style="position:absolute;left:35px;top:108.6px;width:144px;height:1px;background:#eef0f3"></div><div style="position:absolute;left:40px;top:104.6px;width:12px;height:1.5px;background:#c9ccd2"></div><div style="position:absolute;left:65px;top:104.6px;width:9px;height:1.5px;background:#c9ccd2"></div><div style="position:absolute;left:90px;top:104.6px;width:5px;height:1.5px;background:#c9ccd2"></div><div style="position:absolute;left:152px;top:104.6px;width:5px;height:1.5px;background:#c9ccd2"></div><div style="position:absolute;left:170px;top:104.6px;width:3px;height:1.5px;background:#c9ccd2"></div><div style="position:absolute;left:107px;top:104.6px;width:20px;height:1.5px;background:#e3e6ea"></div><div style="position:absolute;left:107px;top:104.6px;width:7px;height:1.5px;background:#888"></div><div style="position:absolute;left:35px;top:116.0px;width:144px;height:1px;background:#eef0f3"></div><div style="position:absolute;left:40px;top:112.0px;width:12px;height:1.5px;background:#c9ccd2"></div><div style="position:absolute;left:65px;top:112.0px;width:9px;height:1.5px;background:#c9ccd2"></div><div style="position:absolute;left:90px;top:112.0px;width:5px;height:1.5px;background:#c9ccd2"></div><div style="position:absolute;left:152px;top:112.0px;width:5px;height:1.5px;background:#c9ccd2"></div><div style="position:absolute;left:170px;top:112.0px;width:3px;height:1.5px;background:#c9ccd2"></div><div style="position:absolute;left:107px;top:112.0px;width:20px;height:1.5px;background:#e3e6ea"></div><div style="position:absolute;left:107px;top:112.0px;width:11px;height:1.5px;background:#2a7ff0"></div><div style="position:absolute;left:35px;top:124.0px;width:144px;height:1px;background:#eef0f3"></div><div style="position:absolute;left:40px;top:120.0px;width:12px;height:1.5px;background:#c9ccd2"></div><div style="position:absolute;left:65px;top:120.0px;width:9px;height:1.5px;background:#c9ccd2"></div><div style="position:absolute;left:90px;top:120.0px;width:5px;height:1.5px;background:#c9ccd2"></div><div style="position:absolute;left:152px;top:120.0px;width:5px;height:1.5px;background:#c9ccd2"></div><div style="position:absolute;left:170px;top:120.0px;width:3px;height:1.5px;background:#c9ccd2"></div><div style="position:absolute;left:107px;top:120.0px;width:20px;height:1.5px;background:#e3e6ea"></div><div style="position:absolute;left:107px;top:120.0px;width:14px;height:1.5px;background:#2a7ff0"></div><div style="position:absolute;left:37px;top:131px;width:45px;height:2px;background:#dde"></div><div style="position:absolute;left:72px;top:130px;width:3px;height:3px;background:#2a7ff0"></div><div style="position:absolute;left:186px;top:41px;width:84px;height:100px;background:#fff"></div><div style="position:absolute;left:189px;top:44px;width:10px;height:2px;background:#888"></div><div style="position:absolute;left:190px;top:52px;width:30px;height:6px;border:1px solid #e6e8ec"></div><div style="position:absolute;left:194px;top:65px;width:2px;height:1.5px;background:#c9ccd2"></div><div style="position:absolute;left:204px;top:65px;width:2px;height:1.5px;background:#c9ccd2"></div><div style="position:absolute;left:214px;top:65px;width:2px;height:1.5px;background:#c9ccd2"></div><div style="position:absolute;left:224px;top:65px;width:2px;height:1.5px;background:#c9ccd2"></div><div style="position:absolute;left:234px;top:65px;width:2px;height:1.5px;background:#c9ccd2"></div><div style="position:absolute;left:244px;top:65px;width:2px;height:1.5px;background:#c9ccd2"></div><div style="position:absolute;left:254px;top:65px;width:2px;height:1.5px;background:#c9ccd2"></div><div style="position:absolute;left:194px;top:75px;width:2px;height:1.5px;background:#c9ccd2"></div><div style="position:absolute;left:204px;top:75px;width:2px;height:1.5px;background:#c9ccd2"></div><div style="position:absolute;left:214px;top:75px;width:2px;height:1.5px;background:#c9ccd2"></div><div style="position:absolute;left:224px;top:75px;width:2px;height:1.5px;background:#c9ccd2"></div><div style="position:absolute;left:234px;top:75px;width:2px;height:1.5px;background:#c9ccd2"></div><div style="position:absolute;left:244px;top:75px;width:2px;height:1.5px;background:#c9ccd2"></div><div style="position:absolute;left:254px;top:75px;width:2px;height:1.5px;background:#c9ccd2"></div><div style="position:absolute;left:194px;top:85px;width:2px;height:1.5px;background:#c9ccd2"></div><div style="position:absolute;left:204px;top:85px;width:2px;height:1.5px;background:#c9ccd2"></div><div style="position:absolute;left:214px;top:85px;width:2px;height:1.5px;background:#c9ccd2"></div><div style="position:absolute;left:224px;top:85px;width:2px;height:1.5px;background:#c9ccd2"></div><div style="position:absolute;left:234px;top:85px;width:2px;height:1.5px;background:#c9ccd2"></div><div style="position:absolute;left:244px;top:85px;width:2px;height:1.5px;background:#c9ccd2"></div><div style="position:absolute;left:254px;top:85px;width:2px;height:1.5px;background:#c9ccd2"></div><div style="position:absolute;left:194px;top:95px;width:2px;height:1.5px;background:#c9ccd2"></div><div style="position:absolute;left:204px;top:95px;width:2px;height:1.5px;background:#c9ccd2"></div><div style="position:absolute;left:214px;top:95px;width:2px;height:1.5px;background:#c9ccd2"></div><div style="position:absolute;left:224px;top:95px;width:2px;height:1.5px;background:#c9ccd2"></div><div style="position:absolute;left:234px;top:95px;width:2px;height:1.5px;background:#c9ccd2"></div><div style="position:absolute;left:244px;top:95px;width:2px;height:1.5px;background:#c9ccd2"></div><div style="position:absolute;left:254px;top:95px;width:2px;height:1.5px;background:#c9ccd2"></div><div style="position:absolute;left:194px;top:105px;width:2px;height:1.5px;background:#c9ccd2"></div><div style="position:absolute;left:204px;top:105px;width:2px;height:1.5px;background:#c9ccd2"></div><div style="position:absolute;left:214px;top:105px;width:2px;height:1.5px;background:#c9ccd2"></div><div style="position:absolute;left:224px;top:105px;width:2px;height:1.5px;background:#c9ccd2"></div><div style="position:absolute;left:234px;top:105px;width:2px;height:1.5px;background:#c9ccd2"></div><div style="position:absolute;left:244px;top:105px;width:2px;height:1.5px;background:#c9ccd2"></div><div style="position:absolute;left:254px;top:105px;width:2px;height:1.5px;background:#c9ccd2"></div><div style="position:absolute;left:194px;top:115px;width:2px;height:1.5px;background:#c9ccd2"></div><div style="position:absolute;left:204px;top:115px;width:2px;height:1.5px;background:#c9ccd2"></div><div style="position:absolute;left:214px;top:115px;width:2px;height:1.5px;background:#c9ccd2"></div><div style="position:absolute;left:224px;top:115px;width:2px;height:1.5px;background:#c9ccd2"></div><div style="position:absolute;left:234px;top:115px;width:2px;height:1.5px;background:#c9ccd2"></div><div style="position:absolute;left:244px;top:115px;width:2px;height:1.5px;background:#c9ccd2"></div><div style="position:absolute;left:254px;top:115px;width:2px;height:1.5px;background:#c9ccd2"></div><div style="position:absolute;left:194px;top:125px;width:2px;height:1.5px;background:#c9ccd2"></div><div style="position:absolute;left:204px;top:125px;width:2px;height:1.5px;background:#c9ccd2"></div><div style="position:absolute;left:214px;top:125px;width:2px;height:1.5px;background:#c9ccd2"></div><div style="position:absolute;left:224px;top:125px;width:2px;height:1.5px;background:#c9ccd2"></div><div style="position:absolute;left:234px;top:125px;width:2px;height:1.5px;background:#c9ccd2"></div><div style="position:absolute;left:244px;top:125px;width:2px;height:1.5px;background:#c9ccd2"></div><div style="position:absolute;left:254px;top:125px;width:2px;height:1.5px;background:#c9ccd2"></div><div style="position:absolute;left:203px;top:109px;width:8px;height:8px;background:#1e6ff0"></div></div></div></div><div class="ti">通用仓库管理平台</div><div class="r1">行业分类：<span class="tag">其他</span><span class="tag">毕业设计</span></div><div class="r2">创建时间：<span style="font-size:15px">2025-08-20 08:38:00</span></div></div><div class="card" style="left:1583px;top:549px"><div class="img" style=""><svg width="312" height="190" style="position:absolute;left:-1px;top:-1px"><use href="#ill"/></svg></div><div class="ti">222</div><div class="r1">行业分类：<span class="tag">智慧政务</span></div><div class="r2">创建时间：<span style="font-size:15px">2025-08-19 17:46:48</span></div></div>
<div class="abs" style="left:250px;top:851px;font-size:14px;line-height:22px;color:#5a5e66">共 22 条</div>
<div class="pg" style="left:319px;background:#f4f5f8"><svg style="margin-top:7px" width="12" height="12" viewBox="0 0 12 12"><path d="M8,1 L3,6 L8,11" fill="none" stroke="#b8bcc4" stroke-width="1.3"/></svg></div>
<div class="pg" style="left:353px;background:#1677ff;color:#fff;font-weight:bold">1</div>
<div class="pg" style="left:387px">2</div>
<div class="pg" style="left:421px">3</div>
<div class="pg" style="left:455px"><svg style="margin-top:7px" width="12" height="12" viewBox="0 0 12 12"><path d="M4,1 L9,6 L4,11" fill="none" stroke="#303133" stroke-width="1.3"/></svg></div>
<div class="abs" style="left:501px;top:851px;font-size:14px;line-height:22px;color:#5a5e66">前往</div>
<div class="abs" style="left:537px;top:849px;width:56px;height:26px;border:1px solid #dcdfe6;border-radius:4px;font-size:14px;line-height:24px;text-align:center;color:#303133">1</div>
<div class="abs" style="left:600px;top:851px;font-size:14px;line-height:22px;color:#5a5e66">页</div>
<!-- cursor -->
<svg class="abs" style="left:1362px;top:80px" width="16" height="24" viewBox="0 0 16 24"><path d="M1.2,1.2 V17.4 L5.4,13.4 L8.3,20.6 L11.4,19.4 L8.5,12.6 H13.4 Z" fill="#fff" stroke="#111" stroke-width="1.1" stroke-linejoin="miter"/></svg>
<!-- blue tab -->
<div class="abs" style="left:1910px;top:957px;width:12px;height:50px;border-radius:6px;background:linear-gradient(180deg,#5cc8ff,#0b9ff5);box-shadow:0 0 4px rgba(0,0,0,0.08)"></div>
</body></html>
